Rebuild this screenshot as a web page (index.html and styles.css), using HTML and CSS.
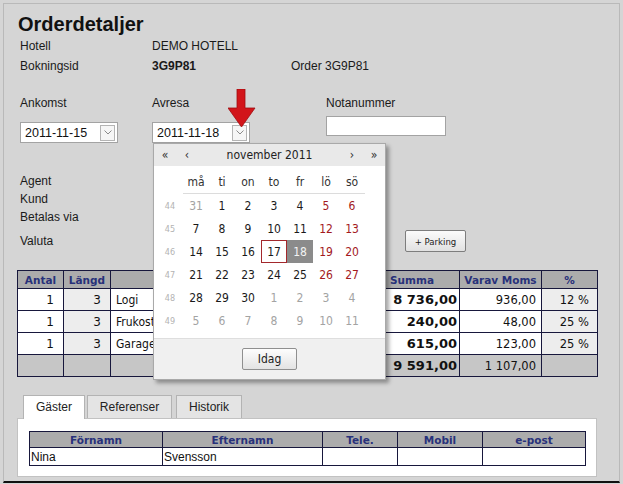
FILE: index.html
```html
<!DOCTYPE html>
<html lang="sv">
<head>
<meta charset="utf-8">
<title>Orderdetaljer</title>
<link rel="stylesheet" href="styles.css">
</head>
<body>
<div class="page">
  <h1 class="title">Orderdetaljer</h1>

  <div class="info">
    <div class="info-row"><span>Hotell</span><span>DEMO HOTELL</span><span></span></div>
    <div class="info-row"><span>Bokningsid</span><span class="bold">3G9P81</span><span>Order 3G9P81</span></div>
  </div>

  <div class="dates">
    <div class="field">
      <div class="flabel">Ankomst</div>
      <div class="dinput"><span>2011-11-15</span><span class="dbtn"><svg width="8" height="5" viewBox="0 0 8 5"><path d="M0.5 0.5 L4 4 L7.5 0.5" fill="none" stroke="#8a8a8a" stroke-width="1"/></svg></span></div>
    </div>
    <div class="field">
      <div class="flabel">Avresa</div>
      <div class="dinput"><span>2011-11-18</span><span class="dbtn"><svg width="8" height="5" viewBox="0 0 8 5"><path d="M0.5 0.5 L4 4 L7.5 0.5" fill="none" stroke="#8a8a8a" stroke-width="1"/></svg></span></div>
    </div>
    <div class="field">
      <div class="flabel">Notanummer</div>
      <div class="tinput"></div>
    </div>
  </div>

  <div class="side">
    <div class="side-row">Agent</div>
    <div class="side-row">Kund</div>
    <div class="side-row">Betalas via</div>
    <div class="valuta"><span>Valuta</span><button class="btn-parking" type="button">+ Parking</button></div>
  </div>

  <table class="order">
    <colgroup>
      <col class="w-antal"><col class="w-langd"><col class="w-desc"><col class="w-summa"><col class="w-moms"><col class="w-pct">
    </colgroup>
    <thead>
      <tr><th>Antal</th><th>Längd</th><th></th><th>Summa</th><th>Varav Moms</th><th>%</th></tr>
    </thead>
    <tbody>
      <tr><td class="num">1</td><td class="num alt">3</td><td class="desc">Logi</td><td class="sum">8 736,00</td><td class="moms">936,00</td><td class="pct alt">12 %</td></tr>
      <tr><td class="num">1</td><td class="num alt">3</td><td class="desc">Frukost</td><td class="sum">240,00</td><td class="moms">48,00</td><td class="pct alt">25 %</td></tr>
      <tr><td class="num">1</td><td class="num alt">3</td><td class="desc">Garage</td><td class="sum">615,00</td><td class="moms">123,00</td><td class="pct alt">25 %</td></tr>
      <tr class="total"><td></td><td></td><td></td><td class="sum">9 591,00</td><td class="moms">1 107,00</td><td></td></tr>
    </tbody>
  </table>

  <div class="tabs">
    <div class="tab t1 active">Gäster</div>
    <div class="tab t2">Referenser</div>
    <div class="tab t3">Historik</div>
  </div>
  <div class="panel">
    <table class="guests">
      <colgroup><col class="g1"><col class="g2"><col class="g3"><col class="g4"><col class="g5"></colgroup>
      <thead><tr><th>Förnamn</th><th>Efternamn</th><th>Tele.</th><th>Mobil</th><th>e-post</th></tr></thead>
      <tbody><tr><td>Nina</td><td>Svensson</td><td></td><td></td><td></td></tr></tbody>
    </table>
  </div>

  <svg class="arrow" width="28" height="39" viewBox="0 0 28 39">
    <polygon points="9,0 17,0 17,19 27,19 13.5,38 0,19 9,19" fill="#d2151a" stroke="#a00d10" stroke-width="0.8"/>
  </svg>

  <div class="cal">
    <div class="cal-head">
      <span class="nav">«</span><span class="nav">‹</span><span class="month">november 2011</span><span class="nav">›</span><span class="nav">»</span>
    </div>
    <div class="cal-grid">
      <span></span><span class="dn">må</span><span class="dn">ti</span><span class="dn">on</span><span class="dn">to</span><span class="dn">fr</span><span class="dn">lö</span><span class="dn">sö</span>
      <span class="wk">44</span><span class="om">31</span><span>1</span><span>2</span><span>3</span><span>4</span><span class="we">5</span><span class="we">6</span>
      <span class="wk">45</span><span>7</span><span>8</span><span>9</span><span>10</span><span>11</span><span class="we">12</span><span class="we">13</span>
      <span class="wk">46</span><span>14</span><span>15</span><span>16</span><span class="today">17</span><span class="sel">18</span><span class="we">19</span><span class="we">20</span>
      <span class="wk">47</span><span>21</span><span>22</span><span>23</span><span>24</span><span>25</span><span class="we">26</span><span class="we">27</span>
      <span class="wk">48</span><span>28</span><span>29</span><span>30</span><span class="om">1</span><span class="om">2</span><span class="om">3</span><span class="om">4</span>
      <span class="wk">49</span><span class="om">5</span><span class="om">6</span><span class="om">7</span><span class="om">8</span><span class="om">9</span><span class="om">10</span><span class="om">11</span>
    </div>
    <div class="cal-foot"><button class="btn-idag" type="button">Idag</button></div>
  </div>
</div>
</body>
</html>
```
FILE: styles.css
```css
* { box-sizing: border-box; }
html, body { margin: 0; height: 484px; overflow: hidden; }
body {
  background: #d5d5d5;
  font-family: "Liberation Sans", Arial, sans-serif;
  font-size: 12px;
  color: #1a1a1a;
}
.page {
  position: relative;
  margin: 3px 3px 0 3px;
  height: 480px;
  border: 1px solid #b9b9b9;
  border-bottom: 2px solid #111;
  padding: 0 0 0 13px;
}
.title {
  margin: 8px 0 0 1px;
  font-size: 20px;
  line-height: 24px;
  font-weight: bold;
  color: #111;
}
.info { padding-left: 3px; }
.info-row {
  display: grid;
  grid-template-columns: 132px 139px auto;
  height: 20px;
  line-height: 20px;
}
.bold { font-weight: bold; }

.dates {
  display: grid;
  grid-template-columns: 132px 174px auto;
  margin-top: 17px;
  padding-left: 3px;
}
.flabel { height: 20px; line-height: 20px; }
.dinput {
  margin-top: 9px;
  width: 98px;
  height: 21px;
  border: 1px solid #a3a3a3;
  background: #fff;
  display: flex;
  align-items: center;
  justify-content: space-between;
  padding: 0 2px 0 4px;
  font-size: 12.5px;
  color: #111;
}
.dbtn {
  width: 15px;
  height: 16px;
  border: 1px solid #b4b4b4;
  background: #f6f6f6;
  display: flex;
  align-items: center;
  justify-content: center;
}
.tinput {
  margin-top: 3px;
  width: 120px;
  height: 20px;
  border: 1px solid #a3a3a3;
  background: #fff;
}

.side { margin-top: 29px; padding-left: 3px; }
.side-row { height: 18px; line-height: 18px; }
.valuta {
  display: grid;
  grid-template-columns: 385px auto;
  align-items: center;
  margin-top: 4px;
  height: 22px;
}
.btn-parking {
  width: 61px;
  height: 22px;
  padding: 0;
  border: 1px solid #7d7d7d;
  border-radius: 2px;
  background: linear-gradient(#fbfbfb, #e1e1e1);
  font-family: "DejaVu Sans Condensed", "DejaVu Sans", sans-serif;
  font-size: 9.5px;
  color: #222;
}

.order {
  margin-top: 18px;
  border-collapse: collapse;
  table-layout: fixed;
  width: 580px;
}
.w-antal { width: 46px; }
.w-langd { width: 47px; }
.w-desc { width: 254px; }
.w-summa { width: 95px; }
.w-moms { width: 82px; }
.w-pct { width: 56px; }
.order th, .order td {
  border: 1px solid #17173c;
  padding: 0;
  white-space: nowrap;
  overflow: hidden;
}
.order th {
  height: 18px;
  background: #acacac;
  color: #28317a;
  font-family: "DejaVu Sans", sans-serif;
  font-weight: bold;
  font-size: 10.5px;
  text-align: center;
}
.order td {
  height: 22px;
  background: #fff;
  font-family: "DejaVu Sans", sans-serif;
  font-size: 12px;
  color: #111;
}
.order td.alt { background: #ededed; }
.order td.num { text-align: right; padding-right: 9px; }
.order td.desc {
  padding-left: 5px;
  font-family: "DejaVu Sans Condensed", "DejaVu Sans", sans-serif;
}
.order td.sum {
  text-align: right;
  padding-right: 2px;
  font-weight: bold;
  font-size: 13px;
}
.order td.moms { text-align: right; padding-right: 5px; font-size: 11.5px; }
.order td.pct { text-align: right; padding-right: 8px; font-size: 11.5px; }
.order tr.total td { background: #c6c6c6; }

.tabs {
  display: flex;
  align-items: flex-start;
  margin-top: 18px;
  padding-left: 6px;
  height: 24px;
  margin-bottom: -1px;
  position: relative;
  z-index: 1;
}
.tab {
  height: 23px;
  border: 1px solid #b3b3b3;
  border-bottom: none;
  background: #e4e4e4;
  display: flex;
  align-items: center;
  justify-content: center;
  font-size: 12px;
  color: #222;
}
.tab.active { background: #fff; height: 24px; padding-bottom: 1px; }
.t1 { width: 62px; margin-right: 2px; }
.t2 { width: 85px; margin-right: 4px; }
.t3 { width: 66px; }
.panel {
  width: 580px;
  height: 59px;
  border: 1px solid #c2c2c2;
  background: #fff;
  padding: 12px 11px 0 11px;
}
.guests {
  border-collapse: collapse;
  table-layout: fixed;
  width: 556px;
}
.g1 { width: 133px; }
.g2 { width: 160px; }
.g3 { width: 75px; }
.g4 { width: 85px; }
.g5 { width: 103px; }
.guests th, .guests td { border: 1px solid #17173c; padding: 0; }
.guests th {
  height: 16px;
  background: #acacac;
  color: #28317a;
  font-family: "DejaVu Sans", sans-serif;
  font-weight: bold;
  font-size: 10.5px;
  text-align: center;
}
.guests td {
  height: 18px;
  padding-left: 1px;
  font-size: 12px;
  color: #111;
}

.arrow {
  position: absolute;
  left: 224px;
  top: 85px;
}

.cal {
  position: absolute;
  left: 149px;
  top: 139px;
  width: 233px;
  height: 237px;
  background: #fff;
  border: 1px solid #a9a9a9;
  box-shadow: 3px 3px 4px rgba(0, 0, 0, 0.35);
  display: flex;
  flex-direction: column;
  font-family: "DejaVu Sans Condensed", "DejaVu Sans", sans-serif;
  font-size: 12px;
  color: #1a1a1a;
  z-index: 2;
}
.cal-head {
  height: 22px;
  background: #e9e9e9;
  display: grid;
  grid-template-columns: 22px 22px 1fr 22px 22px;
  align-items: center;
  text-align: center;
}
.cal-head .nav { color: #333; font-size: 12px; }
.cal-head .month { color: #222; }
.cal-grid {
  display: grid;
  grid-template-columns: repeat(8, 26px);
  grid-template-rows: repeat(7, 23px);
  padding: 5px 0 0 3px;
}
.cal-grid span {
  display: flex;
  align-items: center;
  justify-content: center;
}
.cal-grid .dn { border-bottom: 1px solid #dcdcdc; color: #333; }
.cal-grid .wk { font-size: 9px; color: #b3b3b3; }
.cal-grid .om { color: #a3a3a3; }
.cal-grid .we { color: #a3191d; }
.cal-grid .today { border: 1px solid #a3282c; }
.cal-grid .sel { background: #8b8b8b; color: #f3f3f3; }
.cal-foot {
  margin-top: auto;
  height: 41px;
  border-top: 1px solid #dedede;
  background: #f0f0f0;
  display: flex;
  align-items: center;
  justify-content: center;
}
.btn-idag {
  width: 55px;
  height: 22px;
  padding: 0;
  border: 1px solid #8f8f8f;
  border-radius: 2px;
  background: linear-gradient(#fdfdfd, #e3e3e3);
  font-family: "DejaVu Sans Condensed", "DejaVu Sans", sans-serif;
  font-size: 12px;
  color: #222;
}
```
